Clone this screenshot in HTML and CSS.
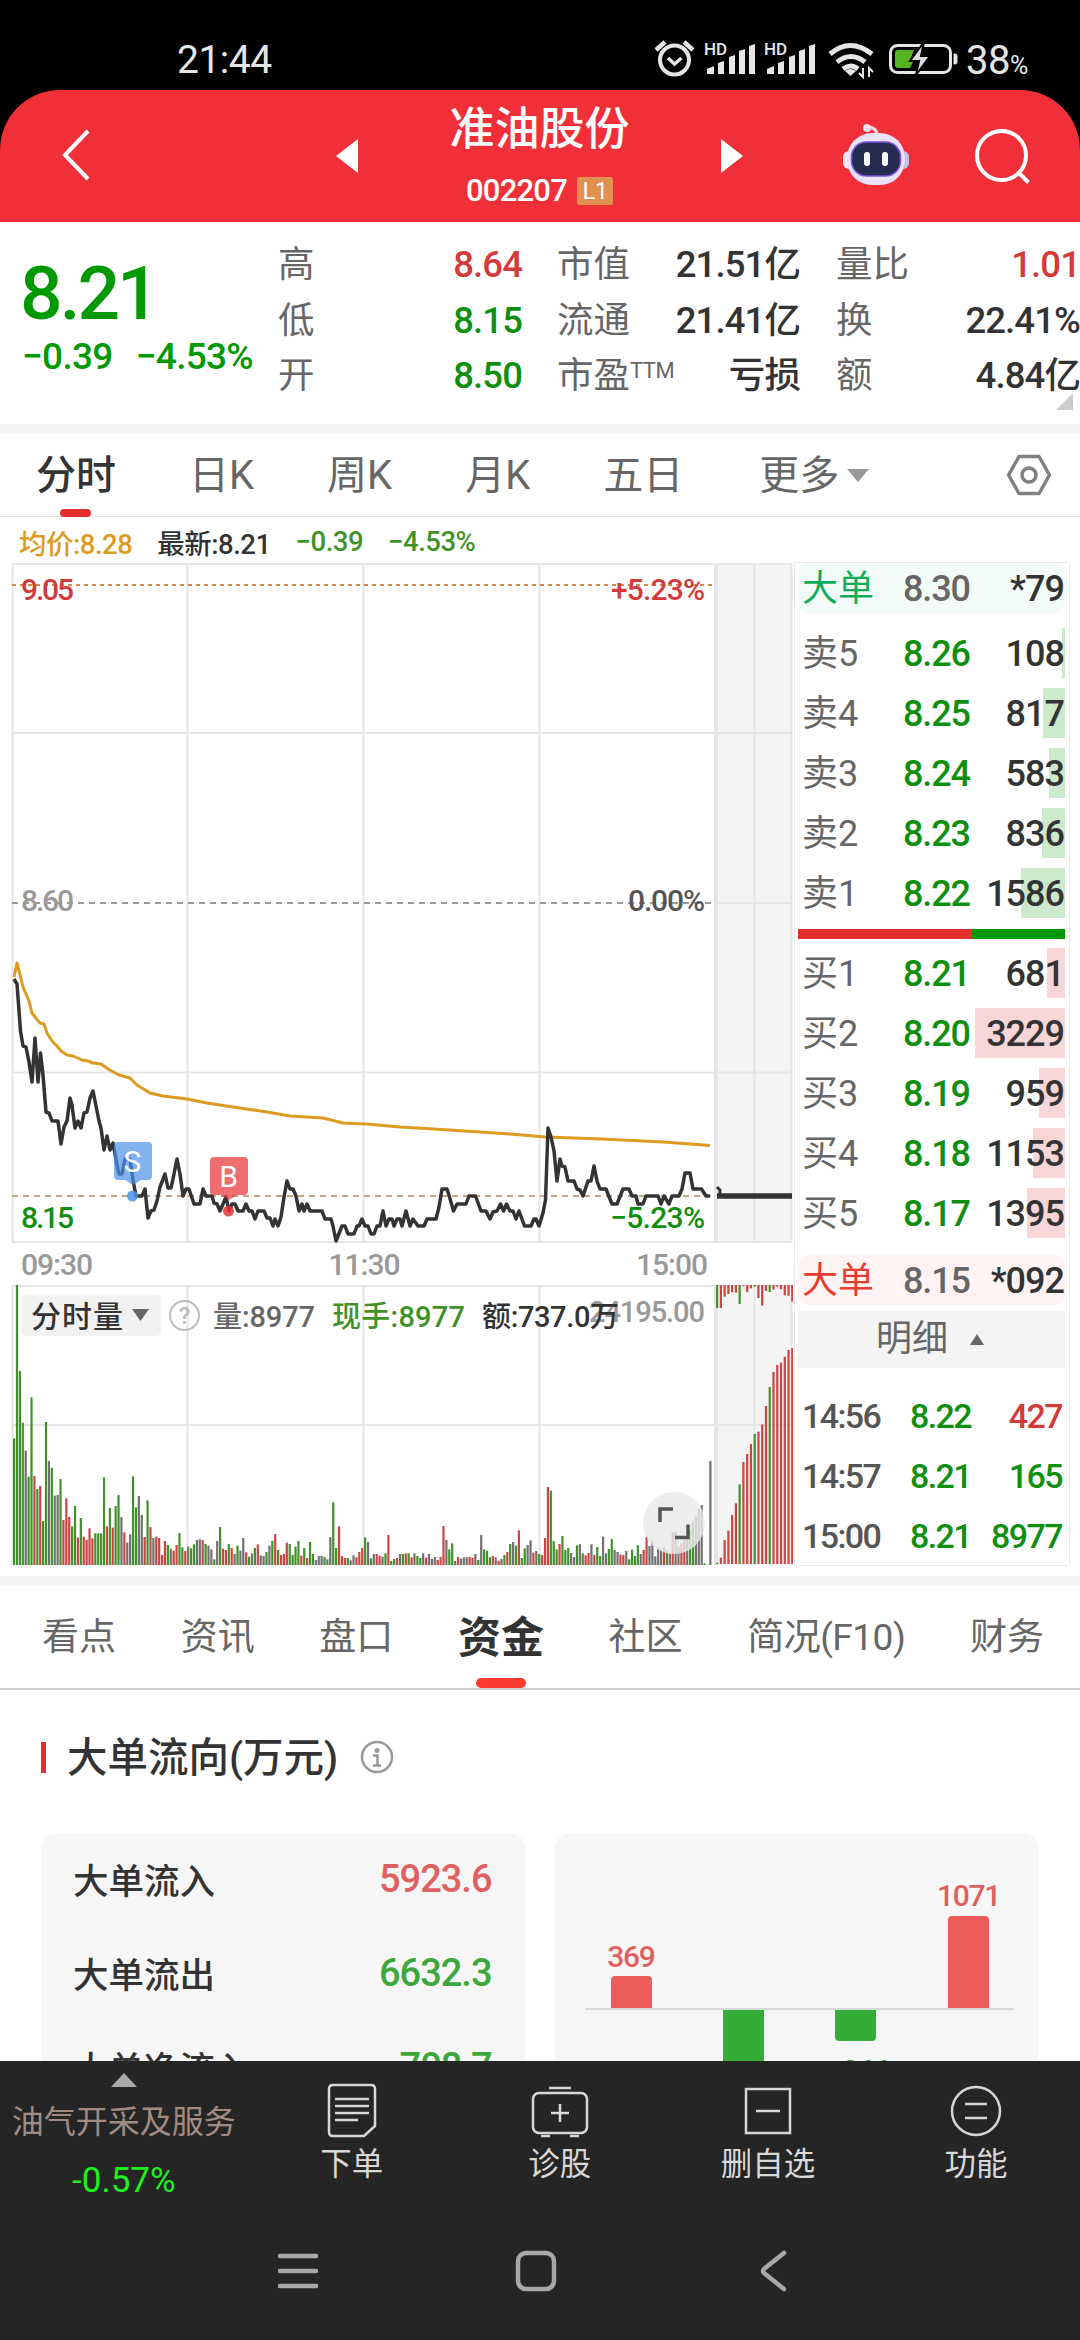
FILE: index.html
```html
<!DOCTYPE html>
<html lang="zh-CN">
<head>
    <meta charset="UTF-8">
    <meta name="viewport" content="width=device-width, initial-scale=1.0">
    <title>准油股份 002207</title>
    <link rel="stylesheet" href="styles.css">
</head>
<body>
    <div class="status-bar">
        <span class="clock">21:44</span>
        <svg class="status-icons" width="332" height="42" viewBox="653 38 332 42">
            <g fill="none" stroke="#e6e6e6" stroke-width="4">
                <circle cx="674.5" cy="60" r="14.5"/>
                <path d="M668 58l6.500 6 7-6" stroke-width="3.500"/>
                <path d="M656 50l9-8M693 50l-9-8" stroke-width="4.500"/>
            </g>
            <g fill="#e6e6e6" id="signals">
                <text x="704" y="55" font-size="17" font-weight="500">HD</text>
                <path d="M707 74v-5l7-3v8zM718 74V63l6-2v13zM729 74V57l6-2v19zM739 74V51l6-2v25zM749 74V46l6-2v30z"/>
                <text x="764" y="55" font-size="17" font-weight="500">HD</text>
                <path d="M767 74v-5l7-3v8zM778 74V63l6-2v13zM789 74V57l6-2v19zM799 74V51l6-2v25zM809 74V46l6-2v30z"/>
            </g>
            <g fill="none" stroke="#e6e6e6" stroke-width="5">
                <path d="M830 54q20-17 42 0M837 62q14-11 28 0M843 69q8-6 15 0"/>
            </g>
            <path d="M845 71q5-4 11 0l-5.500 5z" fill="#e6e6e6"/>
            <path d="M863 68v9l-4-4M869 77v-9l4 4" stroke="#e6e6e6" stroke-width="2" fill="none"/>
            <rect x="890.500" y="45.500" width="60" height="27" rx="7" fill="none" stroke="#e6e6e6" stroke-width="3"/>
            <path d="M898 50h16l-4 10h4l-4 8h-12q-3 0-3-3V53q0-3 3-3z" fill="#53b520"/>
            <path d="M924 42l-14 19h9l-3 14 14-19h-9z" fill="#dcdcdc" stroke="#000" stroke-width="2"/>
            <path d="M954 54h1q2 0 2 2v6q0 2-2 2h-1z" fill="#e6e6e6" stroke="#e6e6e6"/>
        </svg>
        <span class="battery">38<small>%</small></span>
    </div>

    <header class="header">
        <svg class="back" width="30" height="54" viewBox="0 0 30 54"><path d="M27 3L4 27l23 24" fill="none" stroke="#fff" stroke-width="4"/></svg>
        <svg class="prev" width="22" height="34" viewBox="0 0 22 34"><path d="M22 0v34L0 17z" fill="#fff"/></svg>
        <div class="title">
            <h1>准油股份</h1>
            <div class="code">002207 <span class="level">L1</span></div>
        </div>
        <svg class="next" width="22" height="34" viewBox="0 0 22 34"><path d="M0 0v34l22-17z" fill="#fff"/></svg>
        <svg class="robot" width="68" height="64" viewBox="841 122 68 64">
            <path d="M865 126q11 0 11 8" fill="none" stroke="#f3d5ee" stroke-width="3"/>
            <circle cx="866" cy="127" r="4" fill="#fbdfe8"/>
            <rect x="842" y="150" width="12" height="18" rx="6" fill="#efe6fa"/>
            <rect x="896" y="150" width="12" height="18" rx="6" fill="#c6c0f0"/>
            <rect x="846" y="132" width="58" height="52" rx="25" fill="#e9e2fa"/>
            <rect x="850.500" y="141" width="49" height="34" rx="15" fill="#232b50" stroke="#7a55dc" stroke-width="1.500"/>
            <rect x="863" y="151" width="6" height="14" rx="3" fill="#fff"/>
            <rect x="881" y="151" width="6" height="14" rx="3" fill="#fff"/>
        </svg>
        <svg class="search" width="56" height="58" viewBox="972 126 56 58"><circle cx="999.500" cy="154.500" r="24.500" fill="none" stroke="#fff" stroke-width="4"/><path d="M1016 171l10.500 10.500" stroke="#fff" stroke-width="4"/></svg>
    </header>

    <section class="quote">
        <div class="last">
            <div class="price">8.21</div>
            <div class="change"><span>−0.39</span><span>−4.53%</span></div>
        </div>
        <dl class="stats">
            <dt>高</dt><dd class="red">8.64</dd>
            <dt>低</dt><dd class="green">8.15</dd>
            <dt>开</dt><dd class="green">8.50</dd>
        </dl>
        <dl class="stats stats-mid">
            <dt>市值</dt><dd>21.51亿</dd>
            <dt>流通</dt><dd>21.41亿</dd>
            <dt>市盈<sup>TTM</sup></dt><dd>亏损</dd>
        </dl>
        <dl class="stats stats-end">
            <dt>量比</dt><dd class="red">1.01</dd>
            <dt>换</dt><dd>22.41%</dd>
            <dt>额</dt><dd>4.84亿</dd>
        </dl>
        <i class="corner"></i>
    </section>

    <nav class="periods">
        <a class="active">分时</a>
        <a>日K</a>
        <a>周K</a>
        <a>月K</a>
        <a>五日</a>
        <a>更多<i class="caret"></i></a>
        <svg width="46" height="42" viewBox="0 0 46 42"><path d="M13 2.500h20L43.500 21 33 39.500H13L2.500 21z" fill="none" stroke="#808080" stroke-width="3.500" stroke-linejoin="round"/><circle cx="23" cy="21" r="7" fill="none" stroke="#808080" stroke-width="3.500"/></svg>
    </nav>

    <main class="market">
        <div class="charts">
            <div class="legend">
                <span class="avg">均价:8.28</span>
                <span>最新:8.21</span>
                <span class="lime">−0.39</span>
                <span class="lime">−4.53%</span>
            </div>
            <svg class="price-chart" width="793" height="682" viewBox="0 563 793 682">
                <rect x="716" y="564" width="76" height="679" fill="#f4f4f4"/>
                <path class="grid" d="M12 564H792M12 733H792M716 903H792M12 1072.500H792M12 1242H792"/>
                <path class="grid" d="M12.500 564V1243M187.500 564V1243M363.500 564V1243M539.500 564V1243M754.500 564V1243M791.500 564V1243"/>
                <path class="grid thick" d="M716 564V1243"/>
                <path d="M12 585H716" stroke="#d58c42" stroke-width="2" stroke-dasharray="4 4"/>
                <path d="M12 903H714" stroke="#999" stroke-width="2" stroke-dasharray="6 5"/>
                <path d="M12 1196H714" stroke="#bda983" stroke-width="2" stroke-dasharray="6 5"/>
                <g class="axis">
                    <text x="21" y="600" textLength="53" fill="#d43a3a">9.05</text>
                    <text x="611" y="600" textLength="94" fill="#d43a3a">+5.23%</text>
                    <text x="21" y="911" textLength="53" fill="#999">8.60</text>
                    <text x="628" y="911" textLength="77" fill="#555">0.00%</text>
                    <text x="21" y="1228" textLength="53" fill="#0f8f0f">8.15</text>
                    <text x="610" y="1228" textLength="95" fill="#0f8f0f">−5.23%</text>
                </g>
                <polyline class="line-avg" points="14,977 17,963 20,975 23,987 29,1001 32,1013 35,1017 40,1023 44,1024 47,1033 52,1041 57,1046 61,1051 67,1055 73,1056 82,1060 88,1061 93,1063 101,1064 108,1069 119,1075 130,1078 137,1085 150,1093 163,1096 187,1099 207,1103 233,1107 267,1112 290,1116 323,1118 343,1123 367,1124 400,1127 434,1129 510,1134 546,1137 602,1139 663,1142 710,1145.500"/>
                <polyline class="line-price" points="14,979 17,984 20.500,1031 23,1046 26,1047 29,1062 32,1082 35,1038 38,1082 40.500,1053 43,1075 46,1112 49,1113 52,1121 58,1121 61,1144 64,1127 67,1121 70,1098 72,1105 75,1128 78,1121 81,1128 84,1113 87,1112 90,1098 93,1091 96,1106 99,1121 101,1128 104,1150 107,1136 110,1150 113,1143 117,1165 119,1174 122,1174 125,1159 130,1159 133,1180 136,1196 142,1196 145,1189 148,1218 151,1211 154,1210 157,1201 160,1187 165,1174 168,1188 171,1188 174,1174 177,1159 180,1174 183,1196 186,1189 189,1189 194,1204 200,1204 203,1189 206,1196 212,1196 214,1203 217,1204 220,1211 226,1197 229,1211 232,1204 235,1204 238,1211 243,1211 246,1204 249,1211 252,1211 255,1219 258,1211 264,1211 267,1218 270,1218 273,1226 275,1219 278,1226 281,1217 284,1197 287,1181 290,1189 293,1189 296,1196 299,1211 302,1204 304,1211 307,1204 310,1211 322,1211 325,1219 331,1219 333,1226 336,1241 342,1226 345,1226 348,1234 354,1234 357,1226 359,1226 362,1219 365,1226 368,1226 371,1234 374,1234 377,1226 380,1226 383,1211 386,1226 389,1219 392,1219 394,1226 397,1219 400,1219 402,1226 406,1211 410,1226 413,1219 418,1226 424,1226 427,1219 436,1219 439,1207 442,1189 447,1189 449.500,1197 453.500,1211 457,1204 466,1204 469,1196 475.500,1196 478.500,1204 481,1211 486,1211 490,1219 493,1212 497,1211 500.500,1204 503.500,1211 506.500,1204 510,1211 513,1211 516,1219 519,1211 524.500,1226 531,1226 534,1219 536,1219 539,1226 543,1213 545.500,1200 548,1128 551,1137 554,1151 557,1181 560,1159 562,1166 565,1167 568,1181 574,1181 577,1189 580,1190 583,1196 588,1181 591,1181 594,1166 597,1181 600,1189 606,1189 612,1204 617,1204 623,1189 629,1189 632,1196 636,1196 638,1204 643,1204 646,1196 658,1196 661,1204 664,1196 669,1204 672,1196 679,1196 682,1189 685,1173 690,1173 693,1189 701.500,1189 706,1196 710,1196"/>
                <path d="M717 1187l3 3v6" fill="none" stroke="#333" stroke-width="3"/>
                <path d="M717 1196H792" stroke="#333" stroke-width="5.500"/>
                <g class="marker" fill="#4a90ea">
                    <path d="M118 1142h30q4 0 4 4v30q0 4-4 4h-7l-8 5-8-5h-7q-4 0-4-4v-30q0-4 4-4z" opacity=".7"/>
                    <circle cx="132.500" cy="1196" r="5.500" opacity=".85"/>
                    <text x="132.500" y="1172">S</text>
                </g>
                <g class="marker" fill="#e93639">
                    <path d="M214 1157h30q4 0 4 4v30q0 4-4 4h-7l-8 5-8-5h-7q-4 0-4-4v-30q0-4 4-4z" opacity=".72"/>
                    <circle cx="228.500" cy="1211" r="5.500" opacity=".85"/>
                    <text x="228.500" y="1187">B</text>
                </g>
            </svg>
            <div class="times"><span>09:30</span><span>11:30</span><span>15:00</span></div>
            <svg class="volume-chart" width="793" height="282" viewBox="0 1284 793 282">
                <rect x="716" y="1285" width="76" height="280" fill="#f4f4f4"/>
                <path class="grid" d="M12 1286H792M12 1425H792"/>
                <path class="grid" d="M12.500 1285V1565M187.500 1285V1565M363.500 1285V1565M539.500 1285V1565M754.500 1285V1565M791.500 1285V1565"/>
                <path class="grid thick" d="M716 1285V1565"/>
                <g id="bars"></g>
                <g id="afterBars"></g>
                <rect x="21" y="1295" width="140" height="41" rx="5" fill="#f2f2f2"/>
                <path d="M132 1309h17l-8.500 12z" fill="#666"/>
                <circle cx="184.500" cy="1315.500" r="14.500" fill="none" stroke="#bbb" stroke-width="2"/>
                <g class="volume-text">
                    <text x="31" y="1327" textLength="92" font-size="30" fill="#333">分时量</text>
                    <text x="184.500" y="1324" text-anchor="middle" font-size="24" fill="#bbb">?</text>
                    <text x="589" y="1322" textLength="116" fill="#999">24195.00</text>
                    <text x="213" y="1327" textLength="102" fill="#666">量:8977</text>
                    <text x="332" y="1327" textLength="133" fill="#3f9227">现手:8977</text>
                    <text x="482" y="1327" textLength="137" fill="#333">额:737.0万</text>
                </g>
                <circle cx="674" cy="1523" r="31" fill="#e9e9e9" opacity=".82"/>
                <path d="M660 1522v-13h13M675 1537.500h13v-13" fill="none" stroke="#555" stroke-width="3.500"/>
            </svg>
        </div>

        <aside class="book">
            <div class="row big sell"><b>大单</b><span>8.30</span><em>*79</em></div>
            <div class="asks" id="asks"></div>
            <div class="ratio"><i></i></div>
            <div class="bids" id="bids"></div>
            <div class="row big buy"><b>大单</b><span>8.15</span><em>*092</em></div>
            <div class="detail">明细<i></i></div>
            <div class="ticks">
                <div class="tick"><span>14:55</span><b>8.20</b><em class="red">60</em></div>
                <div class="tick"><span>14:56</span><b>8.22</b><em class="red">427</em></div>
                <div class="tick"><span>14:57</span><b>8.21</b><em class="green">165</em></div>
                <div class="tick"><span>15:00</span><b>8.21</b><em class="green">8977</em></div>
            </div>
        </aside>
    </main>

    <nav class="sections">
        <a>看点</a>
        <a>资讯</a>
        <a>盘口</a>
        <a class="active">资金</a>
        <a>社区</a>
        <a>简况(F10)</a>
        <a>财务</a>
    </nav>

    <section class="flow">
        <h2><span>大单流向(万元)</span>
            <svg width="34" height="34" viewBox="0 0 34 34"><circle cx="17" cy="17" r="15" fill="none" stroke="#999" stroke-width="2.500"/><circle cx="17" cy="10.500" r="2.500" fill="#999"/><path d="M13 15.500h4.500V25M13 25.500h8" fill="none" stroke="#999" stroke-width="2.500"/></svg>
        </h2>
        <div class="cards">
            <div class="card totals">
                <div><span>大单流入</span><b class="in">5923.6</b></div>
                <div><span>大单流出</span><b class="out">6632.3</b></div>
                <div><span>大单净流入</span><b class="out">-708.7</b></div>
            </div>
            <div class="card">
                <svg width="483" height="260" viewBox="555 1834 483 260">
                    <path d="M585 2009H1014" stroke="#d9d9d9" stroke-width="2"/>
                    <path d="M611 2008v-28q0-4 4-4h33q4 0 4 4v28zM948 2008v-88q0-4 4-4h33q4 0 4 4v88z" fill="#ed5a5a"/>
                    <path d="M723 2010h41v84h-41zM835 2010h41v27q0 4-4 4h-33q-4 0-4-4z" fill="#34ad37"/>
                    <g class="bar-labels">
                        <text x="631" y="1967" fill="#e06060">369</text>
                        <text x="968.500" y="1906" fill="#e06060">1071</text>
                        <text x="861" y="2081" fill="#3ca83c">-266</text>
                    </g>
                </svg>
            </div>
        </div>
    </section>

    <footer class="toolbar">
        <div class="sector"><i></i><span>油气开采及服务</span><b>-0.57%</b></div>
        <div class="tool">
            <svg width="56" height="60" viewBox="0 0 56 60"><path d="M9 4h38q4 0 4 4v37L40 55H9q-4 0-4-4V8q0-4 4-4z"/><path d="M11 18h34M11 25h34M11 32h34M11 39h23"/></svg>
            下单
        </div>
        <div class="tool">
            <svg width="60" height="60" viewBox="0 0 60 60"><rect x="3" y="12" width="54" height="40" rx="6"/><path d="M19 7h22M11 55h9M40 55h9M21 32h18M30 23v18"/></svg>
            诊股
        </div>
        <div class="tool">
            <svg width="56" height="60" viewBox="0 0 56 60"><rect x="6" y="8" width="44" height="44"/><path d="M16 30h24"/></svg>
            删自选
        </div>
        <div class="tool">
            <svg width="56" height="60" viewBox="0 0 56 60"><circle cx="28" cy="30" r="24"/><path d="M17 23h22M17 37h22"/></svg>
            功能
        </div>
    </footer>
    <div class="system-nav">
        <svg width="40" height="44" viewBox="0 0 40 44"><path d="M2 7h36M2 22h36M2 37h36"/></svg>
        <svg width="44" height="44" viewBox="0 0 44 44"><rect x="4" y="4" width="36" height="36" rx="8"/></svg>
        <svg width="30" height="44" viewBox="0 0 30 44"><path d="M25 4L5 20q-2 2 0 4l20 16"/></svg>
    </div>

    <script src="script.js"></script>
</body>
</html>
```
FILE: styles.css
```css
* {
    box-sizing: border-box;
}
body {
    margin: 0;
    width: 1080px;
    height: 2340px;
    overflow: hidden;
    display: flex;
    flex-direction: column;
    background: linear-gradient(#000 160px, #fff 160px);
    color: #333;
    font-family: Roboto, "Noto Sans CJK SC", sans-serif;
}
h1, h2, dl, dd {
    margin: 0;
}
svg {
    display: block;
    flex: none;
}
i, em {
    font-style: normal;
}
.red { color: #d43a3a; }
.green { color: #0f8f0f; }
.lime { color: #3f9227; }

/* status bar */
.status-bar {
    height: 90px;
    flex: none;
    background: #000;
    color: #e6e6e6;
    display: flex;
    align-items: center;
    padding: 30px 46px 0 177px;
}
.clock {
    font-size: 39px;
    letter-spacing: -0.5px;
    width: 476px;
}
.status-icons {
    margin: -3px -19px 0 0;
}
.battery {
    font-size: 40px;
    letter-spacing: -0.5px;
    white-space: nowrap;
}
.battery small {
    font-size: 25px;
}

/* header */
.header {
    height: 132px;
    flex: none;
    display: flex;
    align-items: center;
    background: #f12f38;
    border-radius: 60px 60px 0 0;
    color: #fff;
}
.back { margin: -2px 0 0 61px; }
.prev { margin-left: 245px; }
.title {
    width: 363px;
    text-align: center;
}
.title h1 {
    font-size: 45px;
    font-weight: 500;
    line-height: 66px;
    padding-top: 5px;
}
.code {
    font-size: 31px;
    font-weight: 500;
    line-height: 30px;
    margin-top: 13px;
    padding-bottom: 14px;
    letter-spacing: -0.8px;
    display: flex;
    justify-content: center;
    align-items: center;
    gap: 10px;
}
.level {
    background: #e29050;
    border-radius: 2px;
    width: 36px;
    height: 28px;
    line-height: 29px;
    font-size: 24px;
    font-weight: 400;
}
.robot { margin: -2px 0 0 99px; }
.search { margin-left: 64px; }

/* quote */
.quote {
    height: 212px;
    flex: none;
    display: flex;
    background: #fff;
    border-bottom: 10px solid #f4f4f4;
    position: relative;
}
.last {
    width: 278px;
    padding: 31px 0 0 20px;
    color: #009900;
}
.price {
    font-size: 75px;
    font-weight: 500;
    line-height: 80px;
    letter-spacing: -3px;
}
.change {
    display: flex;
    gap: 23px;
    margin-top: 2px;
    padding-left: 2px;
    font-size: 37px;
    font-weight: 500;
    line-height: 44px;
    letter-spacing: -0.7px;
    white-space: nowrap;
}
.stats {
    width: 244px;
    padding-top: 15px;
    display: grid;
    grid-template-columns: auto 1fr;
    grid-auto-rows: 55.5px;
    line-height: 55px;
    font-size: 36.5px;
}
.stats-mid {
    width: 243px;
    margin-left: 35px;
}
.stats-end {
    width: 244px;
    margin-left: 36px;
}
.stats dt {
    color: #666;
    white-space: nowrap;
}
.stats sup {
    font-size: 22px;
    line-height: 0;
    vertical-align: 10px;
    letter-spacing: -0.5px;
}
.stats dd {
    text-align: right;
    font-weight: 500;
    letter-spacing: -0.9px;
    white-space: nowrap;
}
.corner {
    position: absolute;
    right: 7px;
    bottom: 14px;
    border-left: 17px solid transparent;
    border-bottom: 17px solid #ccc;
}

/* period tabs */
.periods {
    height: 83px;
    flex: none;
    background: #fff;
    border-bottom: 1px solid #e2e2e2;
    display: flex;
    align-items: center;
    padding-left: 36px;
    font-size: 40px;
    color: #666;
}
.periods a {
    position: relative;
    line-height: 83px;
    margin-right: 73px;
    white-space: nowrap;
}
.periods a:nth-child(5) { margin-right: 76px; }
.periods a:nth-child(6) { margin-right: 137px; }
.periods .active {
    color: #333;
    font-weight: 500;
}
.periods .active::after {
    content: "";
    position: absolute;
    left: 24px;
    bottom: 0;
    width: 31px;
    height: 8px;
    border-radius: 4px;
    background: #e52f2f;
}
.caret {
    display: inline-block;
    margin-left: 8px;
    border: 11px solid transparent;
    border-top: 13px solid #999;
    border-bottom: 0;
    vertical-align: 7px;
}

/* charts and order book */
.market {
    height: 1069px;
    flex: none;
    display: flex;
    background: #fff;
    border-bottom: 10px solid #f4f4f4;
}
.charts {
    width: 794px;
}
.legend {
    height: 46px;
    display: flex;
    align-items: center;
    gap: 25px;
    padding: 3px 0 0 19px;
    font-size: 27.5px;
    font-weight: 500;
    letter-spacing: -0.5px;
}
.avg { color: #dd9a20; }
.grid {
    stroke: #e6e6e6;
    stroke-width: 2;
}
.thick { stroke-width: 4; }
.axis {
    font-size: 30px;
    font-weight: 500;
}
.volume-text {
    font-size: 29px;
    font-weight: 500;
}
.line-avg {
    fill: none;
    stroke: #dd9a20;
    stroke-width: 3;
    stroke-linejoin: round;
}
.line-price {
    fill: none;
    stroke: #333;
    stroke-width: 3.5;
    stroke-linejoin: round;
}
.marker text {
    fill: #fff;
    font-size: 30px;
    text-anchor: middle;
}
.times {
    height: 39px;
    display: flex;
    justify-content: space-between;
    align-items: center;
    padding: 0 87px 1px 21px;
    font-size: 30px;
    font-weight: 500;
    letter-spacing: -1px;
    color: #999;
}
.book {
    width: 276px;
    height: 1004px;
    margin-top: 45px;
    border: 1px solid #e9e9e9;
    padding: 0 4px 0 3px;
    display: flex;
    flex-direction: column;
}
.row {
    height: 50px;
    margin-bottom: 10px;
    flex: none;
    display: grid;
    grid-template-columns: 101px 70px 1fr;
    align-items: center;
    padding: 2px 1px 0 4px;
    font-size: 36px;
    line-height: 48px;
    background-repeat: no-repeat;
    background-position: right;
}
.row b {
    font-weight: 400;
    color: #666;
}
.row span {
    font-weight: 500;
    color: #0f8f0f;
    letter-spacing: -1.1px;
}
.row em {
    font-weight: 500;
    text-align: right;
    letter-spacing: -1px;
}
.big {
    border-radius: 10px;
    margin-bottom: 15px;
}
.big span { color: #666; }
.sell { background: #f2fbf7; }
.sell b { color: #12ab58; }
.buy {
    background: #fff3f3;
    margin: 7px 0 6px;
}
.buy b { color: #e63c32; }
.ask { background-image: linear-gradient(#cce9cc, #cce9cc); }
.bid { background-image: linear-gradient(#f8d5d6, #f8d5d6); }
.ratio {
    height: 10px;
    flex: none;
    margin: 1px 0 9px;
    background: #009900;
}
.ratio i {
    display: block;
    width: 65.3%;
    height: 100%;
    background: #e52f2f;
}
.detail {
    height: 57px;
    flex: none;
    background: #f4f4f4;
    color: #666;
    font-size: 36px;
    line-height: 57px;
    display: flex;
    justify-content: center;
    align-items: center;
    gap: 22px;
    padding-right: 3px;
}
.detail i {
    border: 7px solid transparent;
    border-bottom: 11px solid #666;
    border-top: 0;
}
.ticks {
    flex: 1;
    overflow: hidden;
}
.tick {
    height: 60px;
    line-height: 60px;
    display: grid;
    grid-template-columns: 108px 66px 1fr;
    padding: 0 3px 0 4px;
    font-size: 34px;
    font-weight: 500;
    letter-spacing: -1.6px;
    color: #555;
}
.tick:first-child { margin-top: -42px; }
.tick b {
    font-weight: 500;
    color: #0f8f0f;
}
.tick em { text-align: right; }

/* section tabs */
.sections {
    height: 104px;
    flex: none;
    background: #fff;
    border-bottom: 2px solid #ccc;
    display: flex;
    align-items: center;
    justify-content: space-between;
    padding: 0 36px 0 42px;
    font-size: 37px;
    color: #666;
}
.sections a {
    position: relative;
    line-height: 102px;
    padding-top: 2px;
}
.sections a:nth-child(6) { letter-spacing: -0.5px; }
.sections .active {
    color: #333;
    font-size: 43px;
    font-weight: 700;
}
.sections .active::after {
    content: "";
    position: absolute;
    left: 18px;
    bottom: 1px;
    width: 50px;
    height: 10px;
    border-radius: 5px;
    background: #fb3a32;
}

/* money flow */
.flow {
    height: 371px;
    flex: none;
    overflow: hidden;
    background: #fff;
    padding: 37px 42px 0 41px;
}
.flow h2 {
    display: flex;
    align-items: center;
    height: 60px;
    font-size: 40.5px;
    font-weight: 500;
}
.flow h2 span {
    margin: -5px 22px 0 21px;
}
.flow h2::before {
    content: "";
    width: 5px;
    height: 31px;
    background: #e52f2f;
}
.cards {
    display: grid;
    grid-template-columns: 1fr 1fr;
    gap: 30px;
    margin-top: 47px;
}
.card {
    height: 300px;
    border-radius: 14px;
    background: #f6f6f6;
    overflow: hidden;
}
.totals div {
    height: 94px;
    display: flex;
    justify-content: space-between;
    align-items: center;
    padding: 0 33px 5px 32px;
    font-size: 35.5px;
    font-weight: 500;
}
.totals b {
    font-size: 38px;
    font-weight: 500;
    letter-spacing: -1px;
}
.in { color: #e06060; }
.out { color: #3ca83c; }
.bar-labels {
    font-size: 30px;
    font-weight: 500;
    text-anchor: middle;
    letter-spacing: -1.3px;
}

/* bottom */
.toolbar {
    height: 151px;
    flex: none;
    display: flex;
    background: #252525;
    color: #d8d8d8;
}
.sector {
    width: 248px;
    display: flex;
    flex-direction: column;
    align-items: center;
    padding-top: 12px;
    font-size: 32px;
}
.sector i {
    border: 13px solid transparent;
    border-bottom: 14px solid #aaa;
    border-top: 0;
}
.sector span {
    color: #a18c84;
    line-height: 44px;
    margin-top: 13px;
}
.sector b {
    color: #1ef01e;
    font-weight: 400;
    font-size: 35px;
    line-height: 44px;
    margin-top: 15px;
}
.tool {
    width: 208.3px;
    display: flex;
    flex-direction: column;
    align-items: center;
    padding-top: 20px;
    font-size: 31.5px;
    line-height: 48px;
}
.tool svg {
    fill: none;
    stroke: #d8d8d8;
    stroke-width: 2.5;
}
.system-nav {
    flex: 1;
    background: #252525;
    display: flex;
    padding: 37px 0 0 278px;
}
.system-nav svg {
    fill: none;
    stroke: #a8a8a8;
    stroke-width: 4.5;
    stroke-linecap: round;
}
.system-nav svg:nth-child(2) { margin-left: 196px; }
.system-nav svg:nth-child(3) { margin-left: 201px; }
```
FILE: script.js
```js
const SVG_NS = "http://www.w3.org/2000/svg";
const COLORS = { g: "#3f9227", r: "#cc4444", k: "#707070" };

// one entry per minute: distance from the top of the pane + direction
const minutes = `475g 15g 273g 428g 512k 590g 352g 588r 627g 618r 723g 426g 543k 563g 647k 645k 597g 720r 655r 711r
739g 678g 773r 714g 770r 780r 745r 775r 760g 760g 760g 592g 739r 684g 743r 678g 645g 711k 757r 788k
763k 589g 682g 648k 705k 771r 661g 741r 774k 770r 774r 825r 783r 795g 806k 812r 795r 759g 802g 813r
800k 805g 793g 780k 778k 780r 792g 797k 808k 838g 783k 741g 806r 810r 792g 804r 822k 797g 812k 774k
817r 830g 820k 804g 793r 826k 828k 816g 797k 783g 762r 810g 825r 822r 788r 792g 825g 800g 783g 827r
804g 834r 786g 822g 840k 828k 828k 831g 838k 771k 667g 804g 739r 828r 834r 834g 841k 826k 832r 816r
804r 772g 786k 835g 822k 822r 827r 830k 820g 765r 843g 837g 834r 822k 822g 820r 820g 832r 820k 828g
834g 820k 833r 822k 837k 831k 840r 831r 738r 780k 808g 790g 843k 831r 836k 832k 832k 831r 833r 822k
840g 765k 808g 812g 832g 828r 832k 842r 837k 825g 816r 792g 786k 797g 751r 834g 805g 795k 781k 818r
813k 822g 825r 774r 621r 632g 783g 808g 792r 768g 810g 804g 819k 831k 796g 793k 820g 826r 819r 793k
825r 801g 828g 770k 820k 807g 777g 810k 816k 824r 825r 813k 838g 809g 828g 796g 822k 810r 771r 798k
783k 829k 800k 808k 802r 812g 820k 757r 755k 800k 790r 780r 772k 750g 727g 710k 687k 675k 850g 855k 543k`.split(/\s+/);

const after = "848g 833r 780r 752r 705r 670r 613g 546r 522r 492r 462g 455r 433r 378r 321g 276r 255r 248r 230r 210r 204r".split(" ");
const unmatched = "84g 84r 50r 42r 36r 38r 72g 18r 36r 25r 20g 54r 77r 33r 36g 29r 20r 28r 46r 47r 65r".split(" ");

function addBar(group, x, top, bottom, color) {
    const bar = document.createElementNS(SVG_NS, "rect");
    bar.setAttribute("x", x);
    bar.setAttribute("y", 1280 + top / 3);
    bar.setAttribute("width", 2.2);
    bar.setAttribute("height", Math.max(0, (bottom - top) / 3));
    bar.setAttribute("fill", COLORS[color]);
    group.appendChild(bar);
}

const bars = document.getElementById("bars");
const step = 696.3 / (minutes.length - 1);
minutes.forEach((m, i) => addBar(bars, 13 + i * step, parseInt(m), 855, m.slice(-1)));

const afterBars = document.getElementById("afterBars");
after.forEach((m, i) => addBar(afterBars, 716 + i * 3.76, parseInt(m), 852, m.slice(-1)));
unmatched.forEach((m, i) => addBar(afterBars, 716 + i * 3.76, 15, parseInt(m), m.slice(-1)));

// label, price, lots, width of the depth bar
const asks = [
    ["卖5", "8.26", 108, 3],
    ["卖4", "8.25", 817, 22],
    ["卖3", "8.24", 583, 16],
    ["卖2", "8.23", 836, 23],
    ["卖1", "8.22", 1586, 44]
];
const bids = [
    ["买1", "8.21", 681, 18],
    ["买2", "8.20", 3229, 90],
    ["买3", "8.19", 959, 26],
    ["买4", "8.18", 1153, 32],
    ["买5", "8.17", 1395, 38]
];
function fillBook(id, rows, cls) {
    document.getElementById(id).innerHTML = rows.map(([label, price, lots, width]) =>
        `<div class="row ${cls}" style="background-size: ${width}px 100%"><b>${label}</b><span>${price}</span><em>${lots}</em></div>`
    ).join("");
}
fillBook("asks", asks, "ask");
fillBook("bids", bids, "bid");
```
